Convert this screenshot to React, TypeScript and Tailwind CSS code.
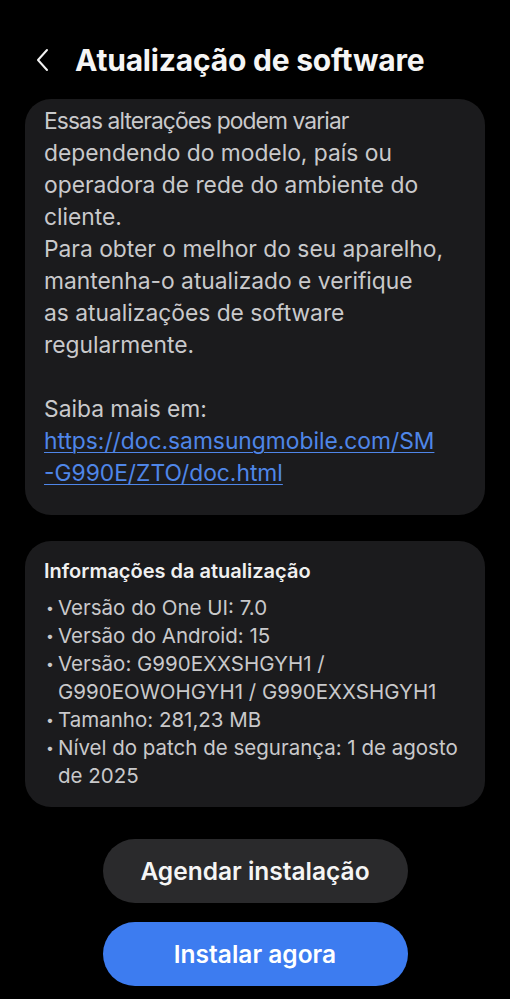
import React from 'react';

const notes: [string, string][] = [
  ['Essas alterações podem variar', 'tracking-[-0.9px]'],
  ['dependendo do modelo, país ou', ''],
  ['operadora de rede do ambiente do', ''],
  ['cliente.', ''],
  ['Para obter o melhor do seu aparelho,', ''],
  ['mantenha-o atualizado e verifique', ''],
  ['as atualizações de software', ''],
  ['regularmente.', ''],
];

const info: string[][] = [
  ['Versão do One UI: 7.0'],
  ['Versão do Android: 15'],
  ['Versão: G990EXXSHGYH1 /', 'G990EOWOHGYH1 / G990EXXSHGYH1'],
  ['Tamanho: 281,23 MB'],
  ['Nível do patch de segurança: 1 de agosto', 'de 2025'],
];

export default function App() {
  return (
    <div
      className="w-[510px] h-[999px] bg-black text-white overflow-hidden flex flex-col"
      style={{ fontFamily: 'Inter, "Noto Sans", sans-serif' }}
    >
      {/* header */}
      <div className="flex items-center h-[60px] mt-[30px] pl-[34px]">
        <svg width="18" height="26" viewBox="0 0 18 26" fill="none" className="shrink-0">
          <path d="M13 3 L4 13 L13 23" stroke="#f2f2f2" strokeWidth="2" strokeLinecap="round" strokeLinejoin="round" />
        </svg>
        <h1 className="ml-[23px] text-[30px] font-bold tracking-[-0.2px] text-[#f5f5f5] whitespace-nowrap">
          Atualização de software
        </h1>
      </div>

      {/* release notes card */}
      <div className="mx-[25px] mt-[9px] rounded-[26px] bg-[#1b1b1d] pl-[19px] pr-3 pt-[6px] pb-[26px] text-[22.8px] leading-[32px] text-[#c9c9cb]">
        {notes.map(([l, cls]) => (
          <div key={l} className={`whitespace-nowrap ${cls}`}>{l}</div>
        ))}
        <div className="h-[32px]" />
        <div>Saiba mais em:</div>
        <div className="text-[#4f86e8] underline underline-offset-[3px] decoration-1 whitespace-nowrap">
          <div>https://doc.samsungmobile.com/SM</div>
          <div>-G990E/ZTO/doc.html</div>
        </div>
      </div>

      {/* update info card */}
      <div className="mx-[25px] mt-[26px] rounded-[26px] bg-[#1b1b1d] pl-[19px] pr-3 pt-[16px] pb-[17px]">
        <div className="text-[20px] font-semibold text-[#f0f0f0] leading-[28px] whitespace-nowrap">
          Informações da atualização
        </div>
        <div className="mt-[9px] text-[20.5px] leading-[28px] text-[#c9c9cb]">
          {info.map((lines) => (
            <div key={lines[0]} className="flex">
              <span className="w-[14px] shrink-0 text-[14px] pl-[2px]">•</span>
              <div>
                {lines.map((l) => (
                  <div key={l} className="whitespace-nowrap">{l}</div>
                ))}
              </div>
            </div>
          ))}
        </div>
      </div>

      {/* actions */}
      <div className="flex flex-col items-center gap-[19px] mt-[32px]">
        <button className="w-[305px] h-[64px] rounded-full bg-[#2a2a2c] text-[24.5px] font-semibold text-[#f5f5f5] whitespace-nowrap">
          Agendar instalação
        </button>
        <button className="w-[305px] h-[64px] rounded-full bg-[#3d7cf0] text-[24.5px] font-semibold text-white whitespace-nowrap">
          Instalar agora
        </button>
      </div>
    </div>
  );
}
